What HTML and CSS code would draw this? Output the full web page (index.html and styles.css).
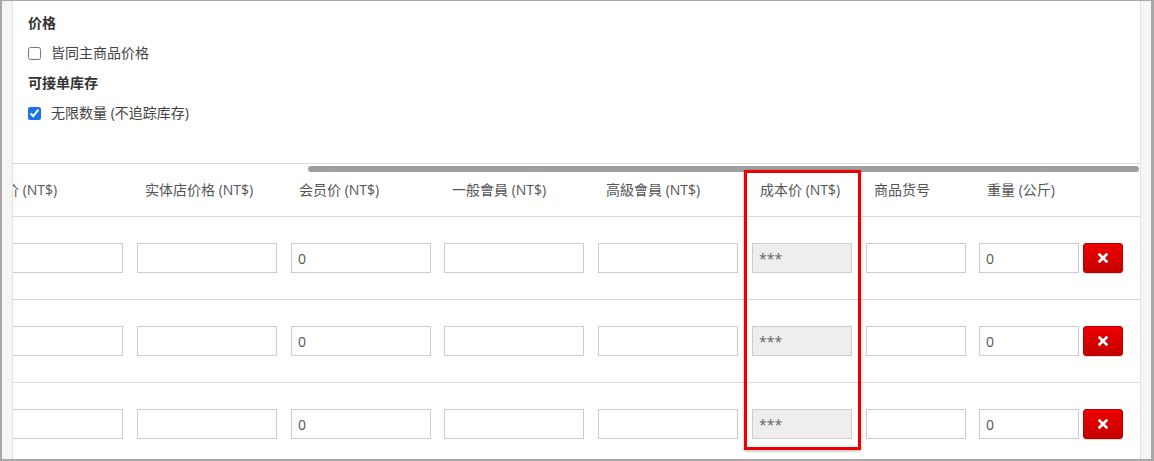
FILE: index.html
```html
<!DOCTYPE html>
<html lang="zh">
<head>
    <meta charset="UTF-8">
    <meta name="viewport" content="width=device-width, initial-scale=1.0">
    <title>商品规格 - 价格</title>
    <link rel="stylesheet" href="styles.css">
</head>
<body>

    <div class="frame">
        <div class="panel">
            <div class="options">
                <div class="opt-title">价格</div>
                <label class="check-row"><input type="checkbox"> 皆同主商品价格</label>
                <div class="opt-title">可接单库存</div>
                <label class="check-row"><input type="checkbox" checked> 无限数量 (不追踪库存)</label>
            </div>

            <!-- 上方的横向卷轴 -->
            <div class="top-scroll">
                <div class="thumb"></div>
            </div>

            <div class="table-wrap">
                <table class="variant-table">
                    <colgroup>
                        <col class="col-price">
                        <col class="col-price">
                        <col class="col-member">
                        <col class="col-price">
                        <col class="col-price">
                        <col class="col-cost">
                        <col class="col-sku">
                        <col class="col-weight">
                    </colgroup>
                    <thead>
                        <tr>
                            <th>售价 (NT$)</th>
                            <th>实体店价格 (NT$)</th>
                            <th>会员价 (NT$)</th>
                            <th>一般會員 (NT$)</th>
                            <th>高級會員 (NT$)</th>
                            <th>成本价 (NT$)</th>
                            <th>商品货号</th>
                            <th>重量 (公斤)</th>
                        </tr>
                    </thead>
                    <tbody>
                        <tr>
                            <td><input type="text" class="inp"></td>
                            <td><input type="text" class="inp"></td>
                            <td><input type="text" class="inp" value="0"></td>
                            <td><input type="text" class="inp"></td>
                            <td><input type="text" class="inp"></td>
                            <td><input type="text" class="inp inp-sm" value="***" disabled></td>
                            <td><input type="text" class="inp inp-sm"></td>
                            <td>
                                <div class="last-cell">
                                    <input type="text" class="inp inp-sm" value="0">
                                    <button class="btn-del" title="删除">
                                        <svg width="10" height="10" viewBox="0 0 10 10"><path d="M1.6 1.6 L8.4 8.4 M8.4 1.6 L1.6 8.4" stroke="#fff" stroke-width="2.7" stroke-linecap="square"/></svg>
                                    </button>
                                </div>
                            </td>
                        </tr>
                        <tr>
                            <td><input type="text" class="inp"></td>
                            <td><input type="text" class="inp"></td>
                            <td><input type="text" class="inp" value="0"></td>
                            <td><input type="text" class="inp"></td>
                            <td><input type="text" class="inp"></td>
                            <td><input type="text" class="inp inp-sm" value="***" disabled></td>
                            <td><input type="text" class="inp inp-sm"></td>
                            <td>
                                <div class="last-cell">
                                    <input type="text" class="inp inp-sm" value="0">
                                    <button class="btn-del" title="删除">
                                        <svg width="10" height="10" viewBox="0 0 10 10"><path d="M1.6 1.6 L8.4 8.4 M8.4 1.6 L1.6 8.4" stroke="#fff" stroke-width="2.7" stroke-linecap="square"/></svg>
                                    </button>
                                </div>
                            </td>
                        </tr>
                        <tr>
                            <td><input type="text" class="inp"></td>
                            <td><input type="text" class="inp"></td>
                            <td><input type="text" class="inp" value="0"></td>
                            <td><input type="text" class="inp"></td>
                            <td><input type="text" class="inp"></td>
                            <td><input type="text" class="inp inp-sm" value="***" disabled></td>
                            <td><input type="text" class="inp inp-sm"></td>
                            <td>
                                <div class="last-cell">
                                    <input type="text" class="inp inp-sm" value="0">
                                    <button class="btn-del" title="删除">
                                        <svg width="10" height="10" viewBox="0 0 10 10"><path d="M1.6 1.6 L8.4 8.4 M8.4 1.6 L1.6 8.4" stroke="#fff" stroke-width="2.7" stroke-linecap="square"/></svg>
                                    </button>
                                </div>
                            </td>
                        </tr>
                    </tbody>
                </table>
            </div>
        </div>

        <!-- 标注框 -->
        <div class="highlight"></div>
    </div>

</body>
</html>
```

FILE: styles.css
```css
body {
    margin: 0;
    padding: 0;
    font-family: 'Open Sans', 'Noto Sans CJK SC', sans-serif;
    font-size: 14px;
    color: #333333;
    background-color: #ffffff;
}

.frame {
    position: relative;
    width: 1154px;
    height: 461px;
    box-sizing: border-box;
    overflow: hidden;
    background-color: #f5f5f5;
    border-top: 1px solid #a8a8a8;
    border-left: 2px solid #a8a8a8;
    border-right: 3px solid #a8a8a8;
    border-bottom: 2px solid #a8a8a8;
    padding: 0 10px;
}

.panel {
    height: 100%;
    background-color: #ffffff;
    border-left: 1px solid #e2e2e2;
    border-right: 1px solid #e2e2e2;
    overflow: hidden;
}

.options {
    display: flex;
    flex-direction: column;
    gap: 10px;
    padding: 12px 15px 40px;
    border-bottom: 1px solid #dddddd;
}

.opt-title {
    font-weight: bold;
    line-height: 20px;
    color: #333333;
}

.check-row {
    display: flex;
    align-items: center;
    gap: 10px;
    line-height: 20px;
    color: #444444;
}

.check-row input {
    width: 13px;
    height: 13px;
    margin: 0;
    accent-color: #1a73e8;
}

.top-scroll {
    height: 9px;
    padding: 2px 1px 0 295px;
    box-sizing: border-box;
}

.thumb {
    height: 6px;
    border-radius: 3px;
    background-color: #a0a0a0;
}

.table-wrap {
    overflow: hidden;
}

.variant-table {
    margin-left: -37px;
    border-collapse: collapse;
    table-layout: fixed;
    width: 1170px;
}

.col-price { width: 154px; }
.col-member { width: 153px; }
.col-cost { width: 114px; }
.col-sku { width: 113px; }
.col-weight { width: 174px; }

.variant-table th {
    text-align: left;
    font-weight: normal;
    color: #555555;
    line-height: 18px;
    padding: 8px 4px 17px 15px;
    border-bottom: 1px solid #dddddd;
    white-space: nowrap;
}

.variant-table td {
    padding: 26px 7px;
    border-bottom: 1px solid #dddddd;
    vertical-align: middle;
}

.inp {
    display: block;
    width: 140px;
    height: 30px;
    box-sizing: border-box;
    border: 1px solid #cccccc;
    padding: 0 6px;
    font-family: 'Open Sans', sans-serif;
    font-size: 14px;
    color: #555555;
    background-color: #ffffff;
}

.inp-sm {
    width: 100px;
}

.inp:disabled {
    background-color: #eeeeee;
    color: #666666;
}

.last-cell {
    display: flex;
    align-items: center;
    gap: 4px;
}

.btn-del {
    width: 40px;
    height: 30px;
    margin-top: -1px;
    padding: 0;
    display: flex;
    align-items: center;
    justify-content: center;
    border: 1px solid #bb0000;
    border-radius: 3px;
    background: linear-gradient(#ee0000, #c40000);
    box-shadow: 0 1px 1px rgba(0, 0, 0, 0.15);
    cursor: pointer;
}

.highlight {
    position: absolute;
    left: 742px;
    top: 169px;
    width: 111px;
    height: 274px;
    border: 3px solid #ee0000;
    box-shadow: 0 1px 3px rgba(0, 0, 0, 0.3);
}
```
